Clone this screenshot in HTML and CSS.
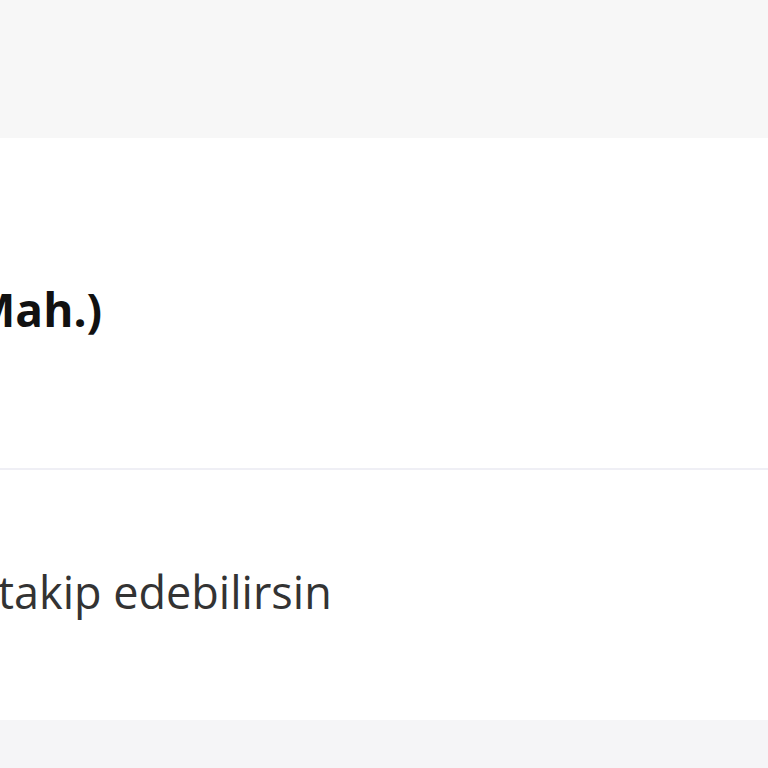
FILE: index.html
```html
<!DOCTYPE html>
<html lang="tr">
<head>
<meta charset="utf-8">
<link rel="stylesheet" href="styles.css">
</head>
<body>
<div class="page">
  <div class="top-band"></div>
  <div class="card">
    <div class="row row-title"><span class="title">Mah.)</span></div>
    <div class="divider"></div>
    <div class="row row-note"><span class="note">takip edebilirsin</span></div>
  </div>
  <div class="bottom-band"></div>
</div>
</body>
</html>
```
FILE: styles.css
```css
html, body {
  margin: 0;
  padding: 0;
  background: #ffffff;
  font-family: "Open Sans", "Noto Sans", sans-serif;
}
.page {
  display: flex;
  flex-direction: column;
  height: 768px;
  overflow: hidden;
}
.top-band {
  height: 138px;
  background: #f7f7f7;
  flex: none;
}
.card {
  display: flex;
  flex-direction: column;
  background: #ffffff;
}
.row {
  display: flex;
  align-items: center;
  overflow: hidden;
  box-sizing: border-box;
}
.row-title {
  height: 330px;
  padding-top: 12px;
}
.row-note {
  height: 250px;
  padding-bottom: 8px;
}
.title {
  font-weight: 700;
  font-size: 46px;
  color: #111111;
  margin-left: -28px;
  white-space: nowrap;
}
.note {
  font-weight: 400;
  font-size: 45px;
  color: #333333;
  margin-left: -2px;
  white-space: nowrap;
}
.divider {
  height: 2px;
  background: #efeff5;
}
.bottom-band {
  flex: 1;
  background: #f5f5f7;
}
```
